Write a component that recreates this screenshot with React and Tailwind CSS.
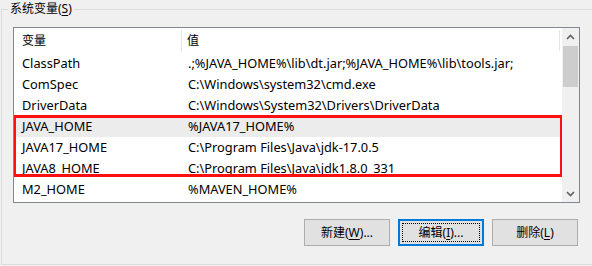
import React from "react";

const rows = [
  { name: "ClassPath", value: ".;%JAVA_HOME%\\lib\\dt.jar;%JAVA_HOME%\\lib\\tools.jar;" },
  { name: "ComSpec", value: "C:\\Windows\\system32\\cmd.exe" },
  { name: "DriverData", value: "C:\\Windows\\System32\\Drivers\\DriverData" },
  { name: "JAVA_HOME", value: "%JAVA17_HOME%", hover: true, mark: true },
  { name: "JAVA17_HOME", value: "C:\\Program Files\\Java\\jdk-17.0.5", mark: true },
  { name: "JAVA8_HOME", value: "C:\\Program Files\\Java\\jdk1.8.0_331", mark: true },
  { name: "M2_HOME", value: "%MAVEN_HOME%" },
];

const Row = ({ row }) => (
  <div className={`flex h-[21px] items-center text-[12.8px] ${row.hover ? "bg-[#ececec]" : ""}`}>
    <div className="w-[168px] pl-[8px] whitespace-nowrap">{row.name}</div>
    <div className="pl-[6px] whitespace-nowrap">{row.value}</div>
  </div>
);

const Btn = ({ label, keyChar, focused }) => (
  <button
    className={`w-[86px] h-[27px] flex items-center justify-center bg-[#e1e1e1] ${
      focused ? "border-2 border-[#0078d7]" : "border border-[#adadad]"
    }`}
  >
    <span
      className={`flex items-center justify-center ${
        focused ? "w-[78px] h-[19px] border border-dotted border-black" : ""
      }`}
    >
      {label}(<span className="underline underline-offset-2">{keyChar}</span>)
      {label === "删除" ? "" : "..."}
    </span>
  </button>
);

export default function App() {
  const marked = rows.filter((r) => r.mark);
  return (
    <div
      className="w-[592px] h-[266px] bg-[#f0f0f0] overflow-hidden text-[12px] text-black"
      style={{ fontFamily: '"Noto Sans", "Noto Sans CJK SC", sans-serif' }}
    >
      <div className="relative mt-[9px] ml-[1px] w-[600px] h-[256px] border border-[#dcdcdc]">
        <div className="absolute -top-[10px] left-[6px] bg-[#f0f0f0] px-[2px] leading-[18px]">
          系统变量(<span className="underline underline-offset-2">S</span>)
        </div>

        {/* list view */}
        <div className="ml-[11px] mt-[17px] w-[567px] h-[176px] border border-[#828790] bg-white flex">
          <div className="w-[548px] flex flex-col overflow-hidden">
            <div className="flex h-[25px] items-center shrink-0">
              <div className="w-[168px] pl-[8px] h-[21px] flex items-center border-r border-[#e5e5e5]">变量</div>
              <div className="w-[378px] pl-[5px] h-[21px] flex items-center border-r border-[#e5e5e5]">值</div>
            </div>
            {rows.slice(0, 3).map((r) => (
              <Row key={r.name} row={r} />
            ))}
            <div className="relative">
              {marked.map((r) => (
                <Row key={r.name} row={r} />
              ))}
              <div className="absolute -left-[1px] -top-[1px] w-[550px] h-[62px] border-[3px] border-[#ff1010] rounded-[2px]" />
            </div>
            {rows.slice(6).map((r) => (
              <Row key={r.name} row={r} />
            ))}
          </div>

          {/* scrollbar */}
          <div className="w-[17px] flex flex-col bg-[#f0f0f0]">
            <div className="h-[18px] flex items-center justify-center">
              <svg width="9" height="6" viewBox="0 0 9 6">
                <path d="M1 5 L4.5 1.5 L8 5" stroke="#606060" strokeWidth="1.6" fill="none" />
              </svg>
            </div>
            <div className="mx-[1px] h-[41px] bg-[#cdcdcd]" />
            <div className="flex-1" />
            <div className="h-[17px] flex items-center justify-center">
              <svg width="9" height="6" viewBox="0 0 9 6">
                <path d="M1 1 L4.5 4.5 L8 1" stroke="#606060" strokeWidth="1.6" fill="none" />
              </svg>
            </div>
          </div>
        </div>

        {/* buttons */}
        <div className="mt-[16px] ml-[302px] flex gap-[8px]">
          <Btn label="新建" keyChar="W" />
          <Btn label="编辑" keyChar="I" focused />
          <Btn label="删除" keyChar="L" />
        </div>
      </div>
    </div>
  );
}
